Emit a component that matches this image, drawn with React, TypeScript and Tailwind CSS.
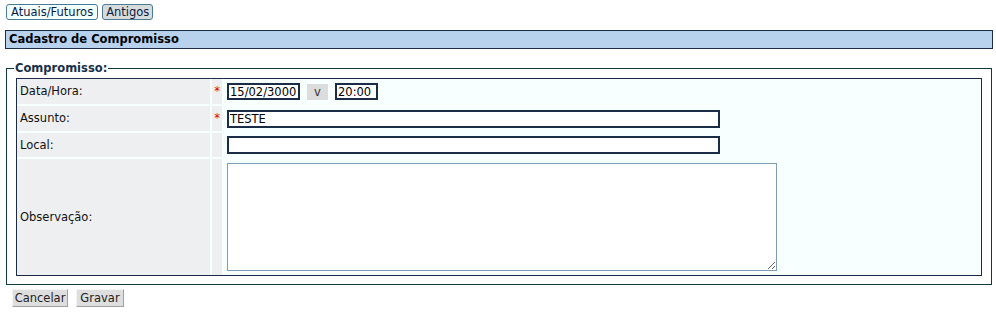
import React from "react";

const font = "font-['DejaVu_Sans','Verdana',sans-serif]";

export default function App() {
  return (
    <div className={`w-[996px] min-h-[313px] bg-white text-[11.5px] leading-[13px] text-[#111] ${font}`}>
      {/* Tabs */}
      <div className="flex gap-[4px] pl-[6px] pt-[4px]">
        <div className="h-[16px] rounded-[3px] border border-[#4b7a94] bg-[#f2ffff] px-[4px] leading-[14px] text-[#0b1b44]">
          Atuais/Futuros
        </div>
        <div className="h-[16px] rounded-[3px] border border-[#4b7a94] bg-[#d6dcdc] px-[3px] leading-[14px] text-[#0b1b44]">
          Antigos
        </div>
      </div>

      {/* Header bar */}
      <div className="ml-[5px] mr-[3px] mt-[10px] flex h-[19px] items-center border border-[#1b2d47] bg-[#b8d1ec] pl-[3px] font-bold text-black">
        Cadastro de Compromisso
      </div>

      {/* Fieldset */}
      <fieldset className="ml-[6px] mr-[4px] mt-[13px] border border-[#0f3a3c] px-[9px] pb-[8px] pt-[3px]">
        <legend className="-ml-[2px] px-[1px] font-bold leading-[13px] text-[#17304a]">Compromisso:</legend>
        <div className="grid grid-cols-[193px_10px_1fr] grid-rows-[25px_25px_24px_116px] gap-[2px] border border-[#1b2b45] bg-[#f7ffff]">
          {/* Row 1 */}
          <div className="flex items-center bg-[#eeeff1] pl-[3px]">Data/Hora:</div>
          <div className="flex items-center justify-center bg-[#eeeff1] text-[#e00000]">*</div>
          <div className="flex items-center pl-[3px]">
            <input
              defaultValue="15/02/3000"
              className="h-[17px] w-[73px] border-2 border-[#1b2c46] bg-white px-[1px] text-[11.5px] leading-[13px] text-black outline-none"
            />
            <button className="ml-[7px] h-[16px] w-[21px] bg-[#dcdcdc] text-[11.5px] leading-[14px] text-[#333]">
              v
            </button>
            <input
              defaultValue="20:00"
              className="ml-[7px] h-[17px] w-[43px] border-2 border-[#1b2c46] bg-white px-[1px] text-[11.5px] leading-[13px] text-black outline-none"
            />
          </div>

          {/* Row 2 */}
          <div className="flex items-center bg-[#eeeff1] pl-[3px]">Assunto:</div>
          <div className="flex items-center justify-center bg-[#eeeff1] text-[#e00000]">*</div>
          <div className="flex items-center pl-[3px]">
            <input
              defaultValue="TESTE"
              className="h-[18px] w-[493px] border-2 border-[#1b2c46] bg-white px-[1px] text-[11.5px] leading-[13px] text-black outline-none"
            />
          </div>

          {/* Row 3 */}
          <div className="flex items-center bg-[#eeeff1] pl-[3px]">Local:</div>
          <div className="bg-[#eeeff1]"></div>
          <div className="flex items-center pl-[3px]">
            <input
              defaultValue=""
              className="h-[18px] w-[493px] border-2 border-[#1b2c46] bg-white px-[1px] text-[11.5px] leading-[13px] text-black outline-none"
            />
          </div>

          {/* Row 4 */}
          <div className="flex items-center bg-[#eeeff1] pl-[3px]">Observação:</div>
          <div className="bg-[#eeeff1]"></div>
          <div className="flex items-center pl-[3px]">
            <textarea className="h-[108px] w-[550px] border border-[#7f9db9] bg-white text-[11.5px] outline-none"></textarea>
          </div>
        </div>
      </fieldset>

      {/* Buttons */}
      <div className="flex gap-[8px] pl-[12px] pt-[4px]">
        <button className="h-[18px] w-[56px] border border-b-[#a0a0a0] border-l-[#f4f4f4] border-r-[#a0a0a0] border-t-[#f4f4f4] bg-[#dedede] text-[11.5px] leading-[14px] text-[#222]">
          Cancelar
        </button>
        <button className="h-[18px] w-[48px] border border-b-[#a0a0a0] border-l-[#f4f4f4] border-r-[#a0a0a0] border-t-[#f4f4f4] bg-[#dedede] text-[11.5px] leading-[14px] text-[#222]">
          Gravar
        </button>
      </div>
    </div>
  );
}
